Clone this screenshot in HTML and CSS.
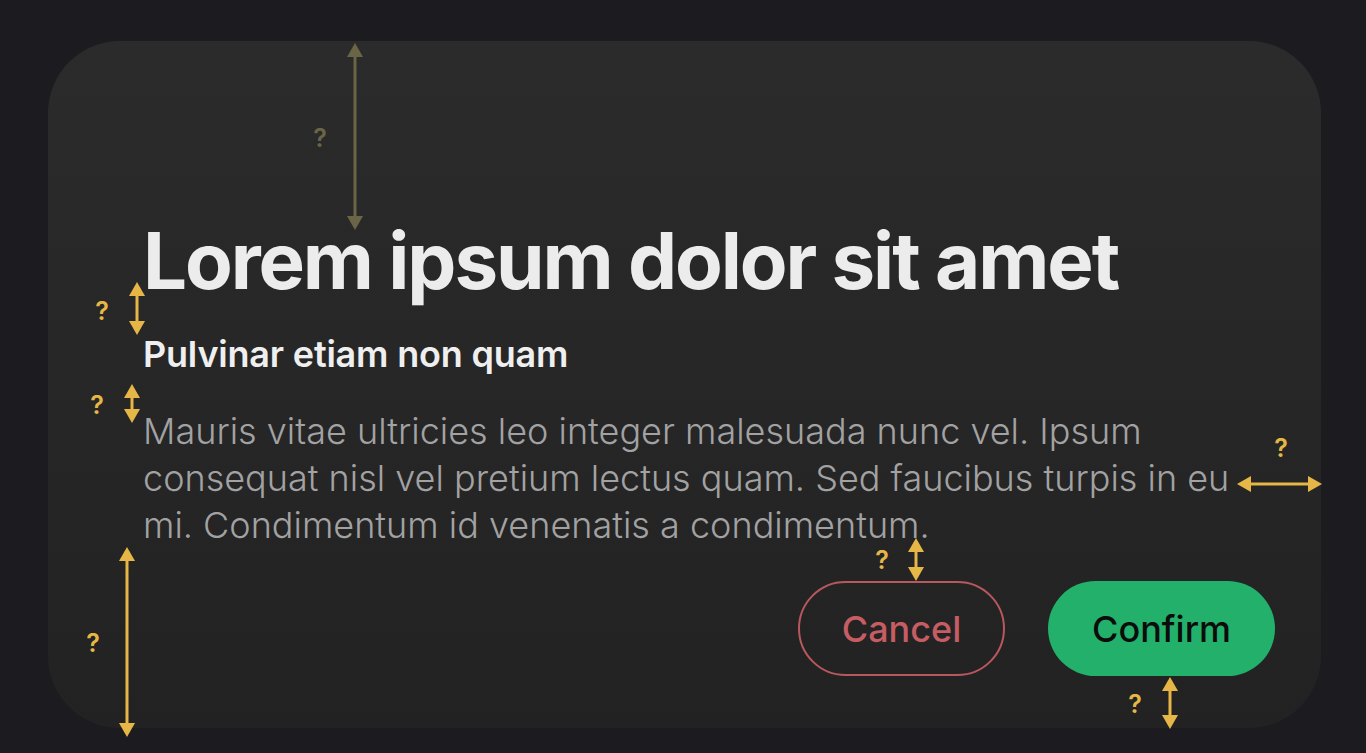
FILE: index.html
```html
<!DOCTYPE html>
<html lang="en">
<head>
<meta charset="utf-8">
<title>Dialog spacing</title>
<link rel="stylesheet" href="styles.css">
</head>
<body>
<main class="card">
  <h1 class="title">Lorem ipsum dolor sit amet</h1>
  <h2 class="subtitle">Pulvinar etiam non quam</h2>
  <p class="body">Mauris vitae ultricies leo integer malesuada nunc vel. Ipsum consequat nisl vel pretium lectus quam. Sed faucibus turpis in eu mi. Condimentum id venenatis a condimentum.</p>
  <div class="actions">
    <button class="btn btn-cancel">Cancel</button>
    <button class="btn btn-confirm">Confirm</button>
  </div>
</main>

<svg class="notes" width="1366" height="753" viewBox="0 0 1366 753" aria-hidden="true">
  <g class="faded">
    <line x1="355" y1="55" x2="355" y2="218"/>
    <polygon points="355,43 347,57 363,57"/>
    <polygon points="355,230 347,216 363,216"/>
    <text x="320" y="147">?</text>
  </g>
  <g class="mark">
    <line x1="137" y1="292" x2="137" y2="325"/>
    <polygon points="137,282 129,296 145,296"/>
    <polygon points="137,335 129,321 145,321"/>
    <text x="102" y="320">?</text>

    <line x1="132" y1="394" x2="132" y2="413"/>
    <polygon points="132,384 124,398 140,398"/>
    <polygon points="132,423 124,409 140,409"/>
    <text x="97" y="414">?</text>

    <line x1="1248" y1="484" x2="1311" y2="484"/>
    <polygon points="1237,484 1251,476 1251,492"/>
    <polygon points="1322,484 1308,476 1308,492"/>
    <text x="1281" y="457">?</text>

    <line x1="916" y1="548" x2="916" y2="571"/>
    <polygon points="916,538 908,552 924,552"/>
    <polygon points="916,581 908,567 924,567"/>
    <text x="882" y="569">?</text>

    <line x1="127" y1="558" x2="127" y2="726"/>
    <polygon points="127,547 119,561 135,561"/>
    <polygon points="127,737 119,723 135,723"/>
    <text x="93" y="652">?</text>

    <line x1="1170" y1="688" x2="1170" y2="718"/>
    <polygon points="1170,677 1162,691 1178,691"/>
    <polygon points="1170,729 1162,715 1178,715"/>
    <text x="1135" y="713">?</text>
  </g>
</svg>
</body>
</html>
```

FILE: styles.css
```css
* { box-sizing: border-box; }

html, body {
  margin: 0;
  padding: 0;
  width: 1366px;
  height: 753px;
  overflow: hidden;
  background: #1c1c20;
  font-family: Inter, "Noto Sans", sans-serif;
}

body {
  position: relative;
  padding: 41px 45px 25px 48px;
}

.card {
  width: 1273px;
  height: 687px;
  border-radius: 72px;
  background: linear-gradient(180deg, #2b2b2c 0%, #262627 55%, #222223 100%);
  padding: 181px 84px 52px 95px;
  display: flex;
  flex-direction: column;
}

.title {
  margin: 0;
  font-size: 78px;
  line-height: 78px;
  font-weight: 700;
  letter-spacing: -2.1px;
  color: #ececec;
}

.subtitle {
  margin: 34px 0 0;
  font-size: 36px;
  line-height: 41px;
  font-weight: 600;
  letter-spacing: -0.2px;
  color: #efefef;
}

.body {
  margin: 33px 0 0;
  font-size: 36px;
  line-height: 47px;
  font-weight: 300;
  color: #a2a2a2;
}

.actions {
  margin-top: auto;
  display: flex;
  justify-content: flex-end;
  gap: 43px;
  margin-right: -38px;
}

.btn {
  height: 95px;
  border-radius: 48px;
  font-family: Inter, "Noto Sans", sans-serif;
  font-size: 36px;
  font-weight: 500;
  cursor: pointer;
}

.btn-cancel {
  width: 207px;
  background: transparent;
  border: 2px solid #b8585e;
  color: #c65d63;
}

.btn-confirm {
  width: 227px;
  background: #22b06b;
  border: none;
  color: #0c0c0c;
}

.notes {
  position: absolute;
  left: 0;
  top: 0;
  pointer-events: none;
}

.notes line { stroke-width: 3; }
.notes text {
  font-family: Inter, "Noto Sans", sans-serif;
  font-size: 25px;
  font-weight: 600;
  text-anchor: middle;
}

.mark line { stroke: #e6b746; }
.mark polygon, .mark text { fill: #e6b746; }

.faded line { stroke: #6b6547; }
.faded polygon, .faded text { fill: #6b6547; }
```
